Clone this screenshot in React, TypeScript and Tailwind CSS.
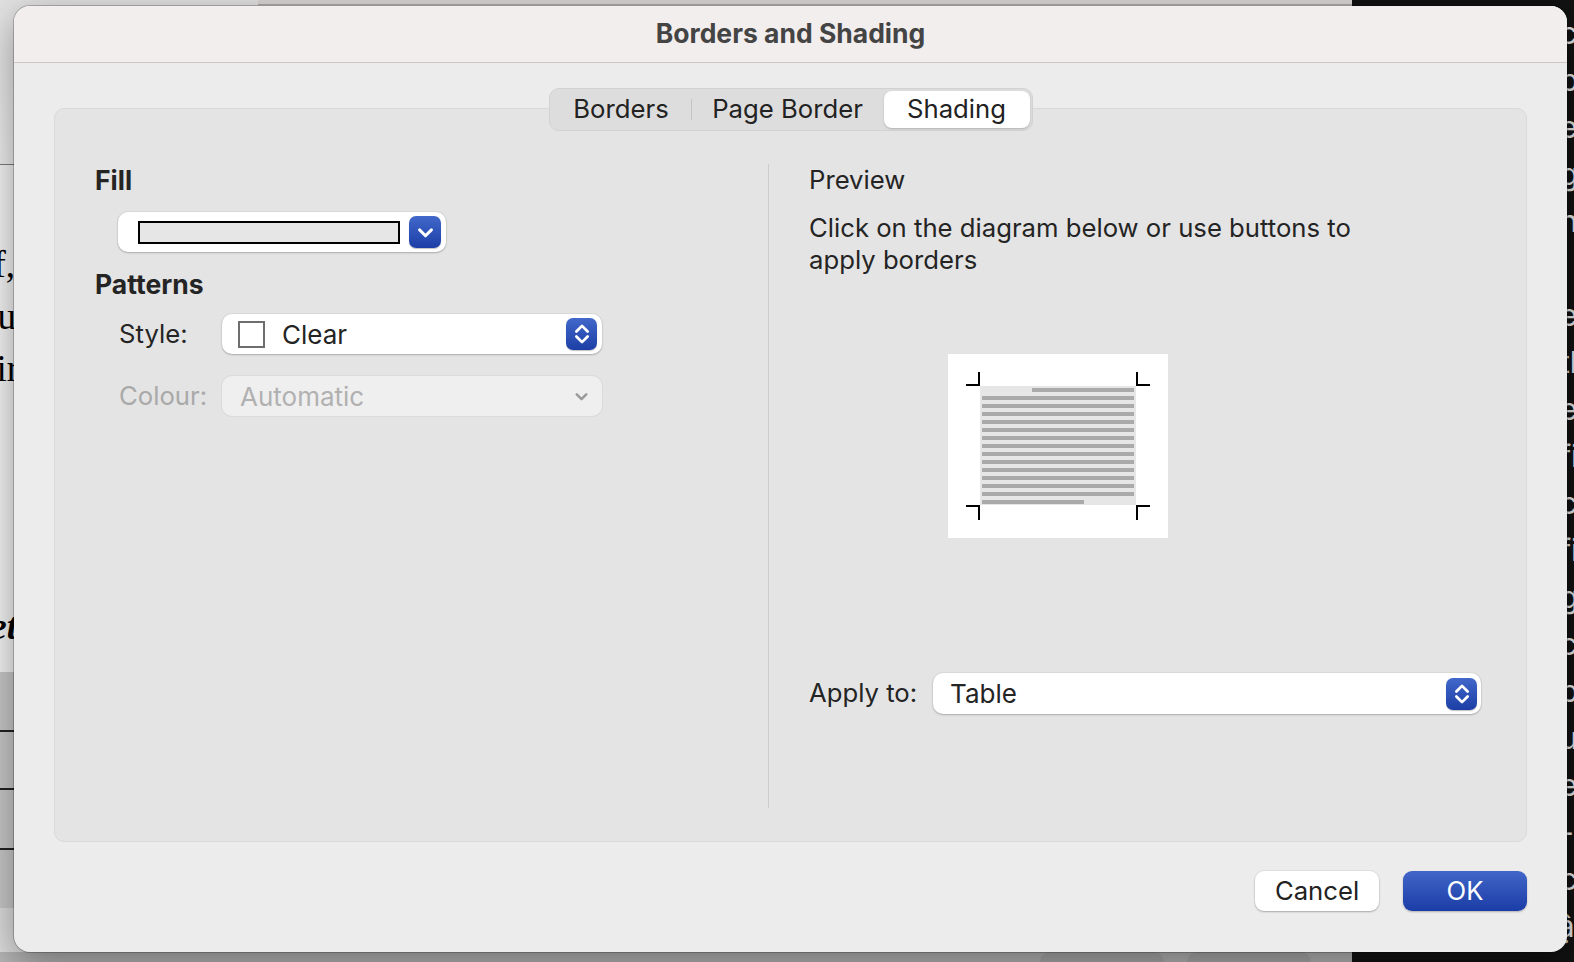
import React from 'react';

const ui = { fontFamily: 'Inter, "Noto Sans", "Liberation Sans", sans-serif' };
const serif = { fontFamily: '"Liberation Serif", "DejaVu Serif", serif' };

const ChevronDown: React.FC<{ className?: string }> = ({ className }) => (
  <svg viewBox="0 0 16 16" className={className} fill="none" stroke="currentColor" strokeWidth={2.3} strokeLinecap="round" strokeLinejoin="round">
    <polyline points="3.5,6 8,10.5 12.5,6" />
  </svg>
);

const Stepper: React.FC = () => (
  <div className="flex h-[32px] w-[31px] items-center justify-center rounded-[7px] bg-gradient-to-b from-[#4268cb] to-[#1c3ea6] text-white shadow-[0_1px_1px_rgba(0,0,0,0.25)]">
    <svg viewBox="0 0 16 20" className="h-[26px] w-[20px]" fill="none" stroke="currentColor" strokeWidth={2.2} strokeLinecap="round" strokeLinejoin="round">
      <polyline points="3.5,8 8,3.5 12.5,8" />
      <polyline points="3.5,12 8,16.5 12.5,12" />
    </svg>
  </div>
);

const PreviewDiagram: React.FC = () => {
  const full = Array.from({ length: 13 }).map((_, i) => 42 + i * 8);
  return (
    <div className="ml-[139px] mt-[78px] h-[184px] w-[220px] bg-white">
      <svg viewBox="0 0 220 184" width={220} height={184}>
        <rect x={32} y={32} width={156} height={119} fill="#e6e6e6" />
        <rect x={84} y={34} width={102} height={4} fill="#aaaaaa" />
        {full.map((y) => (
          <rect key={y} x={34} y={y} width={152} height={4} fill="#aaaaaa" />
        ))}
        <rect x={34} y={146} width={102} height={4} fill="#aaaaaa" />
        <g stroke="#000" strokeWidth={2} fill="none">
          <path d="M18 31 H31 V18" />
          <path d="M202 31 H189 V18" />
          <path d="M18 152 H31 V166" />
          <path d="M202 152 H189 V166" />
        </g>
      </svg>
    </div>
  );
};

const docLine = 'flex justify-end overflow-hidden whitespace-nowrap text-[37px] leading-[52px]';

const Background: React.FC = () => (
  <div className="flex h-full w-full">
    <div className="flex w-[1352px] shrink-0 flex-col overflow-hidden">
      <div className="flex h-[165px] shrink-0 border-b border-[#7c7c7c]">
        <div className="w-[258px] bg-gradient-to-b from-[#e2e2e2] to-[#efefef]" />
        <div className="h-[5px] flex-1 border-b border-[#a9a9a9] bg-[#dcd6d6]" />
      </div>
      <div className="flex h-[507px] shrink-0 flex-col bg-[#f5f5f5] text-black" style={serif}>
        <div className={`mt-[74px] w-[15px] ${docLine}`}>half,</div>
        <div className={`w-[16px] ${docLine}`}>you</div>
        <div className={`w-[19px] ${docLine}`}>air</div>
        <div className={`mt-[206px] w-[17px] font-bold italic ${docLine}`}>Net</div>
      </div>
      <div className="flex h-[236px] shrink-0 flex-col bg-[#c9c9c9]">
        <div className="h-[60px] border-b-2 border-[#222]" />
        <div className="h-[58px] border-b-2 border-[#222]" />
        <div className="h-[60px] border-b-2 border-[#222]" />
      </div>
      <div className="h-[44px] shrink-0 bg-[#dedede]" />
      <div className="flex min-h-0 flex-1 gap-[23px] overflow-hidden bg-[#b6b6b6] pl-[1040px]">
        <div className="h-[30px] w-[124px] rounded-[10px] bg-[#ababab]" />
        <div className="h-[30px] w-[124px] rounded-[10px] bg-[#ababab]" />
      </div>
    </div>
    <div className="flex min-w-0 flex-1 flex-col overflow-hidden bg-[#121212] pl-[208px] pt-[10px] text-[30px] leading-[47px] text-[#e6e6e6]" style={ui}>
      {['cho', 'phải', 'em', 'gì', 'nên', '', 'em', 'thể', 'em', 'fix', 'có', 'fix', 'gì', 'có', 'phải', 'un', 'em', '-', 'có'].map((t, i) => (
        <div key={i} className="h-[47px] shrink-0 whitespace-nowrap">{t}</div>
      ))}
      <div className="-ml-[200px] shrink-0 whitespace-nowrap">an viên kỹ thuật</div>
    </div>
  </div>
);

export default function App() {
  return (
    <div className="relative h-[962px] w-[1574px] overflow-hidden bg-[#d8d8d8]" style={ui}>
      <Background />

      <div className="absolute left-[14px] top-[6px] flex h-[946px] w-[1553px] flex-col overflow-hidden rounded-[16px] bg-[#ececec] shadow-[0_0_0_1px_rgba(0,0,0,0.22),0_12px_40px_rgba(0,0,0,0.4)]">
        {/* title bar */}
        <div className="flex h-[57px] shrink-0 items-center justify-center border-b border-[#cbc7c7] bg-[#f3eeee]">
          <span className="text-[26.5px] font-bold text-[#444]">Borders and Shading</span>
        </div>

        <div className="flex flex-1 flex-col px-[40px] pt-[45px]">
          {/* panel */}
          <div className="flex h-[734px] flex-col rounded-[10px] border border-[#d9d9d9] bg-[#e4e4e4]">
            <div className="-mt-[21px] flex h-[43px] self-center rounded-[10px] border border-[#d2d2d2] bg-[#dddddd] p-[2px] text-[25.7px] text-[#222]">
              <div className="flex w-[139px] items-center justify-center">Borders</div>
              <div className="my-[8px] w-px bg-[#c4c4c4]" />
              <div className="flex w-[192px] items-center justify-center">Page Border</div>
              <div className="flex w-[146px] items-center justify-center rounded-[8px] bg-white shadow-[0_1px_2px_rgba(0,0,0,0.2)]">Shading</div>
            </div>

            <div className="mb-[33px] mt-[33px] flex flex-1">
              {/* left column */}
              <div className="flex w-[713px] flex-col pl-[40px] text-[#242424]">
                <div className="text-[26.5px] font-bold leading-[32px]">Fill</div>
                <div className="ml-[23px] mt-[16px] flex h-[40px] w-[328px] items-center rounded-[10px] bg-white pl-[20px] pr-[5px] shadow-[0_1px_2px_rgba(0,0,0,0.22),0_0_0_1px_rgba(0,0,0,0.04)]">
                  <div className="h-[23px] w-[262px] border-2 border-black bg-[#e6e6e6]" />
                  <div className="ml-auto flex h-[32px] w-[32px] items-center justify-center rounded-[7px] bg-gradient-to-b from-[#4268cb] to-[#1c3ea6] text-white shadow-[0_1px_1px_rgba(0,0,0,0.25)]">
                    <ChevronDown className="h-[21px] w-[21px]" />
                  </div>
                </div>
                <div className="mt-[16px] text-[26.5px] font-bold leading-[32px]">Patterns</div>
                <div className="mt-[14px] flex items-center">
                  <div className="w-[127px] shrink-0 pl-[24px] text-[25.7px]">Style:</div>
                  <div className="flex h-[40px] w-[380px] items-center rounded-[10px] bg-white pl-[16px] pr-[5px] shadow-[0_1px_2px_rgba(0,0,0,0.22),0_0_0_1px_rgba(0,0,0,0.04)]">
                    <div className="h-[27px] w-[27px] border-2 border-[#6e6e6e] bg-white" />
                    <span className="ml-[17px] text-[26px]">Clear</span>
                    <div className="ml-auto">
                      <Stepper />
                    </div>
                  </div>
                </div>
                <div className="mt-[22px] flex items-center">
                  <div className="w-[127px] shrink-0 pl-[24px] text-[25.7px] text-[#a9a9a9]">Colour:</div>
                  <div className="flex h-[40px] w-[380px] items-center rounded-[10px] bg-[#efefef] pl-[18px] pr-[12px] text-[#b1b1b1] shadow-[0_0_0_1px_rgba(0,0,0,0.04)]">
                    <span className="text-[26px]">Automatic</span>
                    <ChevronDown className="ml-auto h-[17px] w-[17px] text-[#9a9a9a]" />
                  </div>
                </div>
              </div>

              <div className="w-px bg-[#cdcdcd]" />

              {/* right column */}
              <div className="flex flex-1 flex-col pl-[40px] text-[#242424]">
                <div className="text-[25.7px] leading-[32px]">Preview</div>
                <div className="mt-[16px] text-[25.7px] leading-[32px]">
                  Click on the diagram below or use buttons to
                  <br />
                  apply borders
                </div>
                <PreviewDiagram />
                <div className="mt-[135px] flex items-center">
                  <div className="w-[124px] text-[25.7px]">Apply to:</div>
                  <div className="flex h-[41px] w-[548px] items-center rounded-[10px] bg-white pl-[17px] pr-[4px] shadow-[0_1px_2px_rgba(0,0,0,0.22),0_0_0_1px_rgba(0,0,0,0.04)]">
                    <span className="text-[26px]">Table</span>
                    <div className="ml-auto">
                      <Stepper />
                    </div>
                  </div>
                </div>
              </div>
            </div>
          </div>

          {/* buttons */}
          <div className="mt-[29px] flex justify-end gap-[24px]">
            <button className="flex h-[40px] w-[124px] items-center justify-center rounded-[9px] bg-white text-[25.7px] text-[#222] shadow-[0_1px_2px_rgba(0,0,0,0.25),0_0_0_1px_rgba(0,0,0,0.04)]">
              Cancel
            </button>
            <button className="flex h-[40px] w-[124px] items-center justify-center rounded-[9px] bg-gradient-to-b from-[#4166c8] to-[#1b3ca6] text-[25.7px] text-white shadow-[0_1px_2px_rgba(0,0,0,0.25)]">
              OK
            </button>
          </div>
        </div>
      </div>
    </div>
  );
}
